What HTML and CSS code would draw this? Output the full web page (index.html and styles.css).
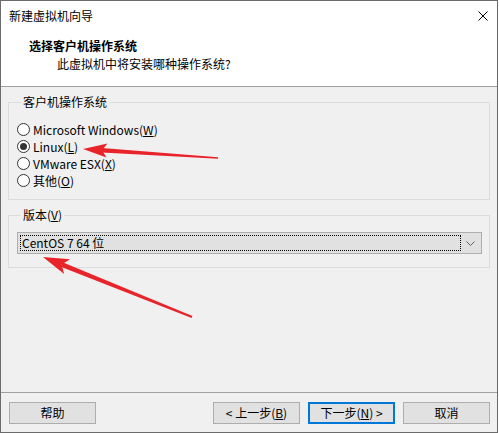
FILE: index.html
```html
<!DOCTYPE html>
<html lang="zh-CN">
<head>
  <meta charset="UTF-8" />
  <title>新建虚拟机向导</title>
  <link rel="stylesheet" href="styles.css">
</head>
<body>
  <div class="window">
    <div class="titlebar">
      <span class="title">新建虚拟机向导</span>
      <svg class="close" width="10" height="10" viewBox="0 0 10 10">
        <path d="M0.5 0.5 L9.5 9.5 M9.5 0.5 L0.5 9.5" stroke="#000" stroke-width="1" fill="none" />
      </svg>
    </div>

    <div class="header">
      <div class="header-title">选择客户机操作系统</div>
      <div class="header-sub">此虚拟机中将安装哪种操作系统?</div>
    </div>

    <div class="content">
      <fieldset class="group">
        <legend>客户机操作系统</legend>
        <div class="radio"><span class="dot"></span>Microsoft Windows(<u>W</u>)</div>
        <div class="radio checked"><span class="dot"></span>Linux(<u>L</u>)</div>
        <div class="radio"><span class="dot"></span>VMware ESX(<u>X</u>)</div>
        <div class="radio"><span class="dot"></span>其他(<u>O</u>)</div>
      </fieldset>

      <fieldset class="group version">
        <legend>版本(<u>V</u>)</legend>
        <div class="select">
          <span class="select-value">CentOS 7 64 位</span>
          <span class="select-arrow">
            <svg width="9" height="5" viewBox="0 0 9 5">
              <path d="M0.5 0.5 L4.5 4.5 L8.5 0.5" stroke="#606060" stroke-width="1" fill="none" />
            </svg>
          </span>
        </div>
      </fieldset>
    </div>

    <div class="footer">
      <button class="btn help">帮助</button>
      <button class="btn">&lt; 上一步(<u>B</u>)</button>
      <button class="btn default">下一步(<u>N</u>) &gt;</button>
      <button class="btn">取消</button>
    </div>

    <!-- red annotation arrows -->
    <svg class="marks" width="498" height="433" viewBox="0 0 498 433">
      <polygon fill="#e8242a" points="83,149 107.5,143.6 102,150.3 106.5,157.6" />
      <polygon fill="#e8242a" points="102.1,148.1 218,157.3 218,158.7 101.9,152.5" />
      <polygon fill="#e8242a" points="43,257 70.1,259.3 61.6,264.5 64.1,274.1" />
      <polygon fill="#e8242a" points="62.5,262.2 192.4,316.1 191.6,317.9 60.7,266.8" />
    </svg>
  </div>
</body>
</html>
```

FILE: styles.css
```css
body {
  margin: 0;
  font-family: "Noto Sans CJK SC", sans-serif;
  font-size: 12px;
  color: #000;
  background: #fff;
}
.window {
  position: relative;
  width: 498px;
  height: 433px;
  box-sizing: border-box;
  border: 1px solid #6b6b6b;
  background: #f0f0f0;
  display: flex;
  flex-direction: column;
}
.titlebar {
  height: 30px;
  background: #fff;
  display: flex;
  align-items: center;
  justify-content: space-between;
  padding: 0 9px 0 8px;
  line-height: 18px;
}
.header {
  height: 56px;
  box-sizing: border-box;
  background: #fff;
  padding-top: 6px;
  border-bottom: 1px solid #a0a0a0;
  line-height: 18px;
}
.header-title {
  font-weight: bold;
  padding-left: 28px;
}
.header-sub {
  padding-left: 56px;
}
.content {
  flex: 1;
  padding: 6px 7px 0 7px;
}
.group {
  margin: 0;
  border: 1px solid #dcdcdc;
  padding: 10px 7px 10px 8px;
}
.group legend {
  padding: 0 2px;
  margin-left: 4px;
  line-height: 18px;
}
.group.version {
  margin-top: 6px;
  padding: 8px 7px 13px 8px;
}
.radio {
  height: 17px;
  display: flex;
  align-items: center;
  line-height: 17px;
}
.dot {
  width: 11px;
  height: 11px;
  border: 1px solid #333;
  border-radius: 50%;
  background: #fff;
  margin-right: 3px;
  display: flex;
  align-items: center;
  justify-content: center;
}
.radio.checked .dot::after {
  content: "";
  width: 7px;
  height: 7px;
  border-radius: 50%;
  background: #333;
}
.select {
  display: flex;
  height: 22px;
  box-sizing: border-box;
  border: 1px solid #adadad;
  background: #e1e1e1;
  padding: 2px;
}
.select-value {
  flex: 1;
  border: 1px dotted #000;
  padding-left: 1px;
  line-height: 14px;
}
.select-arrow {
  width: 18px;
  display: flex;
  align-items: center;
  justify-content: center;
}
.footer {
  height: 40px;
  box-sizing: border-box;
  border-top: 1px solid #a0a0a0;
  padding: 9px 7px 0 8px;
  display: flex;
  gap: 8px;
}
.btn {
  width: 87px;
  height: 22px;
  box-sizing: border-box;
  border: 1px solid #adadad;
  background: #e1e1e1;
  font-family: inherit;
  font-size: 12px;
  line-height: 18px;
  padding: 0;
  color: #000;
}
.btn.help {
  margin-right: auto;
}
.btn.default {
  border: 2px solid #0078d7;
}
.marks {
  position: absolute;
  left: -1px;
  top: -1px;
  pointer-events: none;
}
```
